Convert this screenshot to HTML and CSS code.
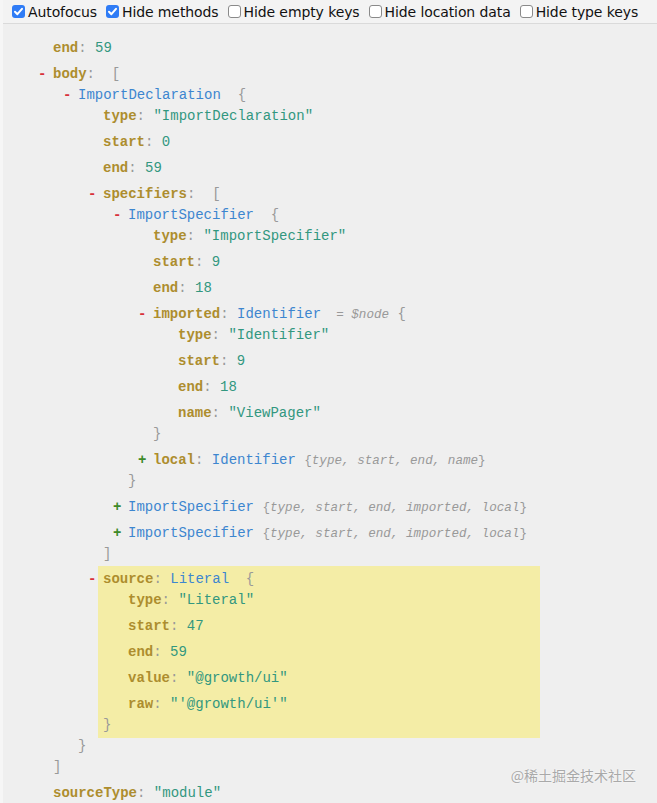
FILE: index.html
```html
<!DOCTYPE html>
<html>
<head>
<meta charset="utf-8">
<link rel="stylesheet" href="styles.css">
</head>
<body>
<div class="app">
  <div class="toolbar">
    <label class="opt"><span class="cb on"><svg viewBox="0 0 13 13" width="13" height="13"><path d="M3 6.8 L5.4 9.2 L10 3.8" fill="none" stroke="#fff" stroke-width="2" stroke-linecap="round" stroke-linejoin="round"/></svg></span>Autofocus</label>
    <label class="opt"><span class="cb on"><svg viewBox="0 0 13 13" width="13" height="13"><path d="M3 6.8 L5.4 9.2 L10 3.8" fill="none" stroke="#fff" stroke-width="2" stroke-linecap="round" stroke-linejoin="round"/></svg></span>Hide methods</label>
    <label class="opt"><span class="cb"></span>Hide empty keys</label>
    <label class="opt"><span class="cb"></span>Hide location data</label>
    <label class="opt"><span class="cb"></span>Hide type keys</label>
  </div>
  <div class="tree">
    <ul class="list root">
      <li class="entry"><div class="line"><span class="k">end</span><span class="p">: </span><span class="n">59</span></div></li>
      <li class="entry">
        <div class="line"><span class="t minus">-</span><span class="k">body</span><span class="p">:  [</span></div>
        <ul class="list">
          <li class="entry">
            <div class="line"><span class="t minus">-</span><span class="tn">ImportDeclaration</span><span class="p">  {</span></div>
            <ul class="list">
              <li class="entry"><div class="line"><span class="k">type</span><span class="p">: </span><span class="s">"ImportDeclaration"</span></div></li>
              <li class="entry"><div class="line"><span class="k">start</span><span class="p">: </span><span class="n">0</span></div></li>
              <li class="entry"><div class="line"><span class="k">end</span><span class="p">: </span><span class="n">59</span></div></li>
              <li class="entry">
                <div class="line"><span class="t minus">-</span><span class="k">specifiers</span><span class="p">:  [</span></div>
                <ul class="list">
                  <li class="entry">
                    <div class="line"><span class="t minus">-</span><span class="tn">ImportSpecifier</span><span class="p">  {</span></div>
                    <ul class="list">
                      <li class="entry"><div class="line"><span class="k">type</span><span class="p">: </span><span class="s">"ImportSpecifier"</span></div></li>
                      <li class="entry"><div class="line"><span class="k">start</span><span class="p">: </span><span class="n">9</span></div></li>
                      <li class="entry"><div class="line"><span class="k">end</span><span class="p">: </span><span class="n">18</span></div></li>
                      <li class="entry">
                        <div class="line"><span class="t minus">-</span><span class="k">imported</span><span class="p">: </span><span class="tn">Identifier</span><span class="meta">  = $node</span><span class="p"> {</span></div>
                        <ul class="list">
                          <li class="entry"><div class="line"><span class="k">type</span><span class="p">: </span><span class="s">"Identifier"</span></div></li>
                          <li class="entry"><div class="line"><span class="k">start</span><span class="p">: </span><span class="n">9</span></div></li>
                          <li class="entry"><div class="line"><span class="k">end</span><span class="p">: </span><span class="n">18</span></div></li>
                          <li class="entry"><div class="line"><span class="k">name</span><span class="p">: </span><span class="s">"ViewPager"</span></div></li>
                        </ul>
                        <div class="close">}</div>
                      </li>
                      <li class="entry"><div class="line"><span class="t plus">+</span><span class="k">local</span><span class="p">: </span><span class="tn">Identifier</span> <span class="compact">{<i>type, start, end, name</i>}</span></div></li>
                    </ul>
                    <div class="close">}</div>
                  </li>
                  <li class="entry"><div class="line"><span class="t plus">+</span><span class="tn">ImportSpecifier</span> <span class="compact">{<i>type, start, end, imported, local</i>}</span></div></li>
                  <li class="entry"><div class="line"><span class="t plus">+</span><span class="tn">ImportSpecifier</span> <span class="compact">{<i>type, start, end, imported, local</i>}</span></div></li>
                </ul>
                <div class="close">]</div>
              </li>
              <li class="entry hl">
                <div class="hlbox">
                  <div class="line"><span class="t minus">-</span><span class="k">source</span><span class="p">: </span><span class="tn">Literal</span><span class="p">  {</span></div>
                  <ul class="list">
                    <li class="entry"><div class="line"><span class="k">type</span><span class="p">: </span><span class="s">"Literal"</span></div></li>
                    <li class="entry"><div class="line"><span class="k">start</span><span class="p">: </span><span class="n">47</span></div></li>
                    <li class="entry"><div class="line"><span class="k">end</span><span class="p">: </span><span class="n">59</span></div></li>
                    <li class="entry"><div class="line"><span class="k">value</span><span class="p">: </span><span class="s">"@growth/ui"</span></div></li>
                    <li class="entry"><div class="line"><span class="k">raw</span><span class="p">: </span><span class="s">"'@growth/ui'"</span></div></li>
                  </ul>
                  <div class="close">}</div>
                </div>
              </li>
            </ul>
            <div class="close">}</div>
          </li>
        </ul>
        <div class="close">]</div>
      </li>
      <li class="entry"><div class="line"><span class="k">sourceType</span><span class="p">: </span><span class="s">"module"</span></div></li>
    </ul>
  </div>
  <div class="watermark">@稀土掘金技术社区</div>
</div>
</body>
</html>
```

FILE: styles.css
```css
html, body {
  margin: 0;
  padding: 0;
  height: 100%;
  overflow: hidden;
}
body {
  background: #efefef;
}
.app {
  position: relative;
  height: 803px;
  overflow: hidden;
  border-left: 3px solid #f6f6f6;
  background: #efefef;
}
.toolbar {
  height: 23px;
  border-bottom: 1px solid #dadada;
  background: #f3f3f3;
  display: flex;
  align-items: center;
  padding-left: 9px;
  gap: 9px;
  font-family: "DejaVu Sans", Verdana, sans-serif;
  font-size: 14px;
  letter-spacing: -0.1px;
  color: #111;
  white-space: nowrap;
}
.opt {
  display: flex;
  align-items: center;
  gap: 3px;
}
.cb {
  width: 11px;
  height: 11px;
  border: 1px solid #8a8a8a;
  border-radius: 3px;
  background: #fff;
  display: inline-flex;
  align-items: center;
  justify-content: center;
}
.cb.on {
  width: 13px;
  height: 13px;
  border: none;
  background: #2f7cf6;
}
.tree {
  padding: 14px 0 0 50px;
  font-family: "Liberation Mono", "DejaVu Sans Mono", monospace;
  font-size: 14px;
  color: #999;
}
.list {
  list-style: none;
  margin: 0;
  padding: 0 0 0 25px;
  display: flex;
  flex-direction: column;
  gap: 5px;
}
.list.root {
  padding-left: 0;
}
.line, .close {
  line-height: 21px;
  height: 21px;
  white-space: pre;
}
.close {
  color: #999;
}
.t {
  display: inline-block;
  width: 15px;
  margin-left: -15px;
  font-weight: bold;
}
.t.minus { color: #d8313a; }
.t.plus { color: #3d8a29; }
.k {
  color: #ad8d2e;
  font-weight: bold;
}
.p { color: #999; }
.n { color: #32977f; }
.s { color: #32977f; }
.tn { color: #3d86cf; }
.meta {
  font-size: 0.9em;
  font-style: italic;
  color: #999;
}
.compact {
  font-size: 0.9em;
  color: #999;
}
.compact i {
  font-style: italic;
}
.hlbox {
  background: #f4eda6;
  margin: -4px 0 -2px -5px;
  padding: 3px 0 2px 5px;
  width: 437px;
}
.watermark {
  position: absolute;
  right: 21px;
  bottom: 18px;
  font-family: "Noto Sans CJK SC", sans-serif;
  font-size: 14px;
  color: #a9a9a9;
  text-shadow: 0 0 2px #fff;
}
```
